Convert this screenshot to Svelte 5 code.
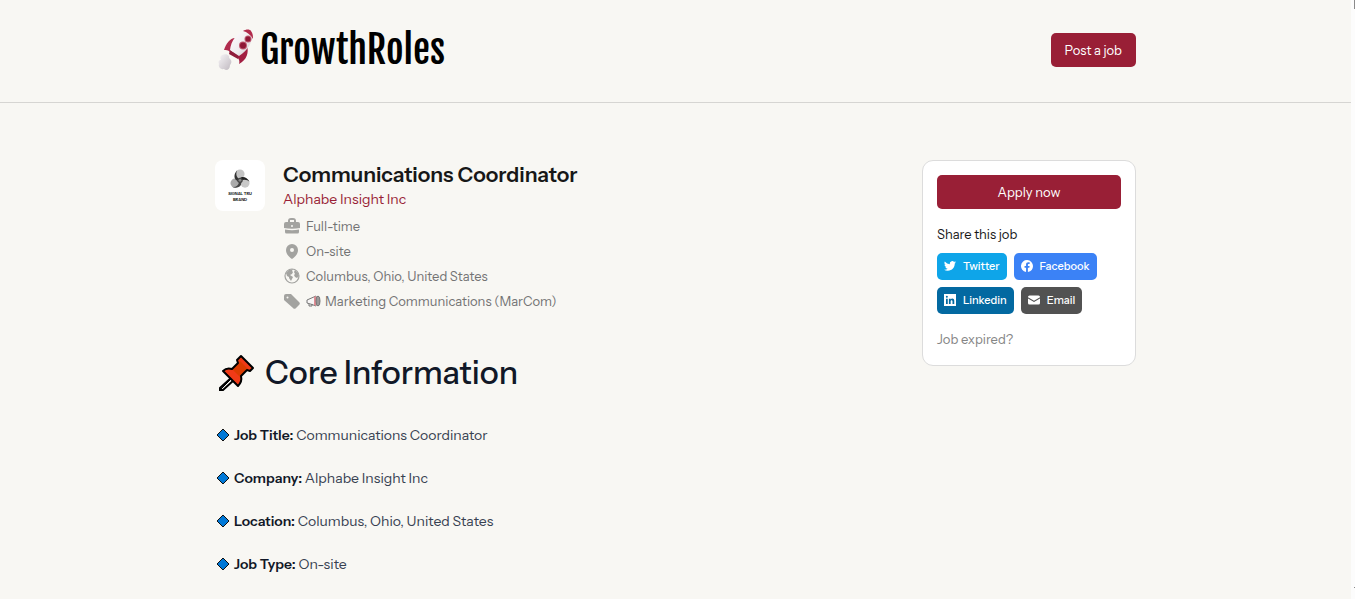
<script lang="ts">
	const details = [
		{ label: 'Job Title:', value: 'Communications Coordinator' },
		{ label: 'Company:', value: 'Alphabe Insight Inc' },
		{ label: 'Location:', value: 'Columbus, Ohio, United States' },
		{ label: 'Job Type:', value: 'On-site' }
	];

	const shares = [
		{
			name: 'Twitter',
			icon: 'M24 4.6a10 10 0 0 1-2.8.8 5 5 0 0 0 2.1-2.7 10 10 0 0 1-3.1 1.2 4.9 4.9 0 0 0-8.4 4.5A14 14 0 0 1 1.7 3.1a4.9 4.9 0 0 0 1.5 6.6 5 5 0 0 1-2.2-.6 4.9 4.9 0 0 0 3.9 4.9 5 5 0 0 1-2.2.1 4.9 4.9 0 0 0 4.6 3.4A9.9 9.9 0 0 1 0 19.5 14 14 0 0 0 7.5 21.7c9.1 0 14-7.5 14-14v-.6A10 10 0 0 0 24 4.6z'
		},
		{
			name: 'Facebook',
			icon: 'M24 12a12 12 0 1 0-13.9 11.9v-8.4h-3V12h3V9.4c0-3 1.8-4.7 4.5-4.7 1.3 0 2.7.2 2.7.2v3h-1.5c-1.5 0-2 .9-2 1.9V12h3.4l-.5 3.5h-2.9v8.4A12 12 0 0 0 24 12z'
		},
		{
			name: 'Linkedin',
			icon: 'M0 0v24h24V0H0zm7.5 20H4V9.3h3.5V20zM5.7 7.7a2 2 0 1 1 0-4 2 2 0 0 1 0 4zM20.5 20H17v-5.3c0-3.3-3.7-3-3.7 0V20H9.8V9.3h3.5v1.6c1.6-2.9 7.2-3.1 7.2 2.7V20z'
		},
		{
			name: 'Email',
			icon: 'M3 3h18a3 3 0 0 1 3 3v.7L12 13.3 0 6.7V6a3 3 0 0 1 3-3zM0 9.2V18a3 3 0 0 0 3 3h18a3 3 0 0 0 3-3V9.2l-12 6.600L0 9.200z'
		}
	];
</script>

<div class="page">
	<header>
		<div class="container bar">
			<a class="logo" href="/">
				<svg viewBox="0 0 36 42" width="36" height="42" aria-hidden="true">
					<defs>
						<linearGradient id="hull" x1="0" y1="0" x2="1" y2="1">
							<stop offset="0" stop-color="#fff" />
							<stop offset="0.6" stop-color="#efebee" />
							<stop offset="1" stop-color="#c4b8c0" />
						</linearGradient>
						<linearGradient id="puff" x1="0" y1="0" x2="1" y2="1">
							<stop offset="0" stop-color="#f7f5f7" />
							<stop offset="1" stop-color="#c0b9c0" />
						</linearGradient>
					</defs>
					<path d="M18 9c-5 0-9 6-11 12 2 0 4 0 6 2l6-8z" fill="#b02c4d" />
					<path d="M30 17c2 6 0 14-8 18 1-3 0-5-2-7l5-8z" fill="#a31f42" />
					<path d="M13 21l9 5-1 4-9-5z" fill="#8f1d3b" />
					<path d="M29 1c3 0 6 1 6 3 1 9-4 17-13 23l-9-6C14 12 20 3 29 1z" fill="url(#hull)" />
					<path d="M26 2c3-2 7-2 8 0 2 3 2 5 2 8-2-4-6-7-10-8z" fill="#b22b4c" />
					<circle cx="31" cy="10" r="3.500" fill="#bd5970" /><circle cx="31" cy="10" r="2.500" fill="#8f1736" />
					<circle cx="26" cy="16.500" r="4" fill="#bd5970" /><circle cx="26" cy="16.500" r="3" fill="#8f1736" />
					<path d="M5 26c4-2 8 0 7 3 3 2 3 5 1 7 0 5-4 6-6 4-4 1-6-3-5-5-1-3 0-4 2-4-1-2-1-4 1-5z" fill="url(#puff)" />
				</svg>
				<span>GrowthRoles</span>
			</a>
			<button class="primary">Post a job</button>
		</div>
	</header>

	<main class="container">
		<article>
			<div class="summary">
				<div class="company-logo">
					<svg viewBox="0 0 22 22" width="20" height="20" aria-hidden="true">
						<circle cx="11" cy="5.500" r="5" fill="#c4c4c4" />
						<circle cx="5.500" cy="15.500" r="5" fill="#aaa" />
						<circle cx="16.500" cy="15.500" r="5" fill="#c8c8c8" />
						<path d="M8 1.500c-3 3-4 7-2 10l5 4-1-4c-3-3-4-6-2-10z" fill="#333" />
						<path d="M2 19.500c4 2 8 1 10-2l1-6-3 3c-1 4-4 6-8 5z" fill="#444" />
						<path d="M21.500 14c-2-4-6-6-9-5l-5 3 4 1c4-2 8-1 10 1z" fill="#222" />
						<circle cx="11" cy="12.500" r="3" fill="#444" />
						<circle cx="11" cy="12.500" r="1.500" fill="#888" />
					</svg>
					<span>SIGNAL TRU<br />BRAND</span>
				</div>
				<div>
					<h1>Communications Coordinator</h1>
					<a class="company" href="/company">Alphabe Insight Inc</a>
					<ul class="meta">
						<li>
							<svg viewBox="0 0 16 16" width="16" height="16" aria-hidden="true">
								<path d="M4 4V3a3 3 0 0 1 3-3h2a3 3 0 0 1 3 3v1h2a2 2 0 0 1 2 2v4c-5 1-11 1-16 0V6a2 2 0 0 1 2-2h2zm2 0h4V2H6v2zm2 3a1 1 0 1 0 0 2 1 1 0 0 0 0-2z" fill-rule="evenodd" />
								<path d="M1 11.500c5 1 9 1 14 0V14a1.500 1.500 0 0 1-1.500 1.500h-11A1.500 1.500 0 0 1 1 14v-2.500z" />
							</svg>
							Full-time
						</li>
						<li>
							<svg viewBox="0 0 16 16" width="16" height="16" aria-hidden="true">
								<path d="M8 1a6 6 0 0 0-6 6c0 4 3 7 6 9 3-2 6-5 6-9a6 6 0 0 0-6-6zm0 4a2 2 0 1 1 0 4 2 2 0 0 1 0-4z" fill-rule="evenodd" />
							</svg>
							On-site
						</li>
						<li>
							<svg viewBox="0 0 16 16" width="16" height="16" aria-hidden="true">
								<circle cx="8" cy="8" r="7" fill="none" stroke="currentColor" stroke-width="1.2" />
								<path d="M2 5l3-3 4-1-1 2 1 1-1 2-2 1 3 2-1 2-1 2-2-3V9L3 8zM11 2l3 3 1 3-2 2-2-1-1-2 1-1-1-2z" />
							</svg>
							Columbus, Ohio, United States
						</li>
						<li>
							<svg viewBox="0 0 16 16" width="16" height="16" aria-hidden="true">
								<path d="M0 3a2 2 0 0 1 2-2h5l8 8a2 2 0 0 1 0 3l-3 3a2 2 0 0 1-3 0L0 7V3zm3.500.5a1 1 0 1 0 0 2 1 1 0 0 0 0-2z" fill-rule="evenodd" />
							</svg>
							<span class="tag">
								<svg viewBox="0 0 15 13" width="15" height="13" aria-hidden="true">
									<path d="M1 5l9-4v10L6 9.500 1 8z" fill="#f7f5f5" stroke="#777" />
									<path d="M3 9v2h3V9" fill="none" stroke="#777" />
									<path d="M8 2l2-1v10l-2-1z" fill="#e18b92" />
									<ellipse cx="12" cy="6" rx="2" ry="5" fill="#999" stroke="#777" />
								</svg>
								Marketing Communications (MarCom)
							</span>
						</li>
					</ul>
				</div>
			</div>

			<h2>
				<svg viewBox="0 0 40 40" width="40" height="40" aria-hidden="true">
					<path d="M16 25L5 35v2h3l11-10" fill="#f8f7f3" stroke="#000" stroke-width="2" />
					<path d="M6 36l11-11" stroke="#000" stroke-width="1" />
					<path d="M26 3l12 12-3 3-3-1-6 6c1 4 0 7-3 10L8 18c3-3 6-3 9-2l6-6-1-3z" fill="#f03a17" />
					<path d="M25 8l8 8-8 8-7-7z" fill="#da3b01" />
					<path d="M26 3l12 12-3 3-3-1-6 6c1 4 0 7-3 10L8 18c3-3 6-3 9-2l6-6-1-3z" fill="none" stroke="#000" stroke-width="2" stroke-linejoin="round" />
				</svg>
				Core Information
			</h2>

			{#each details as detail}
				<p>
					<svg viewBox="0 0 14 14" width="14" height="14" aria-hidden="true">
						<path d="M7 1l6 6-6 6-6-6z" fill="#0078d7" stroke="#111" />
					</svg>
					<span><strong>{detail.label}</strong> {detail.value}</span>
				</p>
			{/each}
		</article>

		<aside>
			<button class="primary apply">Apply now</button>
			<div>Share this job</div>
			<div class="shares">
				{#each shares as share}
					<a href="/share" class="share {share.name.toLowerCase()}">
						<svg viewBox="0 0 24 24" width="12" height="12" aria-hidden="true">
							<path d={share.icon} />
						</svg>
						<span>{share.name}</span>
					</a>
				{/each}
			</div>
			<a class="expired" href="/expired">Job expired?</a>
		</aside>
	</main>
</div>

<style>
	:global(body) {
		background: #fcfcfc;
		overflow: hidden;
	}

	.page {
		margin-right: 4px;
		min-height: 100vh;
		box-sizing: border-box;
		background: #f8f7f3;
		color: #171717;
		font-family: "Instrument Sans", Inter, "Liberation Sans", sans-serif;
		font-size: 13px;
		line-height: 20px;
	}

	/* edge of the scrollbar track */
	.page::before,
	.page::after {
		content: '';
		position: absolute;
		top: 0;
		right: 0;
		width: 1px;
		height: 9px;
		background: #8b8b8b;
	}

	.page::after {
		top: auto;
		bottom: 11px;
		height: 1px;
	}

	a {
		color: inherit;
		text-decoration: none;
	}

	button {
		border: 0;
		font: inherit;
		cursor: pointer;
	}

	svg {
		flex: none;
	}

	.container {
		max-width: 921px;
		margin: 0 auto;
	}

	header {
		border-bottom: 1px solid #d6d5d2;
	}

	.bar {
		display: flex;
		align-items: center;
		justify-content: space-between;
		padding: 26px 0 28px;
	}

	.logo {
		display: flex;
		align-items: center;
		gap: 7px;
		padding-left: 2px;
		color: #000;
		font-family: "Fjalla One", "Roboto Condensed", "Liberation Sans Narrow", "Open Sans Condensed", sans-serif;
		font-size: 38px;
		line-height: 48px;
		font-weight: 400;
	}

	.primary {
		padding: 7px 14px;
		border-radius: 5px;
		background: #991f36;
		color: #fff;
		font-size: 13px;
	}

	main {
		display: flex;
		align-items: flex-start;
		justify-content: space-between;
		padding-top: 57px;
	}

	.summary {
		display: flex;
		gap: 18px;
	}

	.company-logo {
		display: flex;
		flex-direction: column;
		align-items: center;
		gap: 2px;
		box-sizing: border-box;
		width: 50px;
		height: 51px;
		padding-top: 9px;
		border-radius: 8px;
		background: #fff;
		font-size: 4px;
		line-height: 6px;
		font-weight: 800;
		text-align: center;
	}

	h1 {
		margin: 0;
		font-size: 21px;
		line-height: 29px;
		font-weight: 600;
	}

	.company {
		display: block;
		color: #991f36;
		font-size: 14px;
		line-height: 20px;
	}

	.meta {
		display: flex;
		flex-direction: column;
		gap: 5px;
		margin: 7px 0 0;
		padding: 0;
		list-style: none;
		color: #737373;
	}

	.meta li {
		display: flex;
		align-items: center;
		gap: 6px;
	}

	.meta li > svg {
		margin-left: 1px;
		color: #a3a3a0;
		fill: currentColor;
	}

	.tag {
		display: flex;
		align-items: center;
		gap: 4px;
	}

	h2 {
		display: flex;
		align-items: center;
		gap: 10px;
		margin: 40px 0 28px;
		color: #111827;
		font-size: 32px;
		line-height: 44px;
		font-weight: 500;
	}

	p {
		display: flex;
		align-items: center;
		gap: 4px;
		margin: 0 0 19px;
		padding-left: 1px;
		color: #374151;
		font-size: 14px;
		line-height: 24px;
	}

	strong {
		color: #111827;
		font-weight: 600;
	}

	aside {
		box-sizing: border-box;
		width: 214px;
		padding: 14px 14px 16px;
		border: 1px solid #dcdcdc;
		border-radius: 11px;
		background: #fff;
	}

	.apply {
		width: 100%;
		margin-bottom: 15px;
	}

	.shares {
		display: flex;
		flex-wrap: wrap;
		gap: 7px;
		margin: 9px 0 15px;
	}

	.share {
		display: flex;
		align-items: center;
		gap: 7px;
		padding: 3px 7px 4px;
		border-radius: 5px;
		color: #fff;
		font-size: 11px;
		font-weight: 500;
	}

	.share svg {
		fill: currentColor;
	}

	.twitter {
		background: #0ea5e9;
	}

	.facebook {
		background: #3b82f6;
	}

	.linkedin {
		background: #0369a1;
	}

	.email {
		background: #525252;
	}

	.expired {
		display: block;
		color: #858585;
	}
</style>
